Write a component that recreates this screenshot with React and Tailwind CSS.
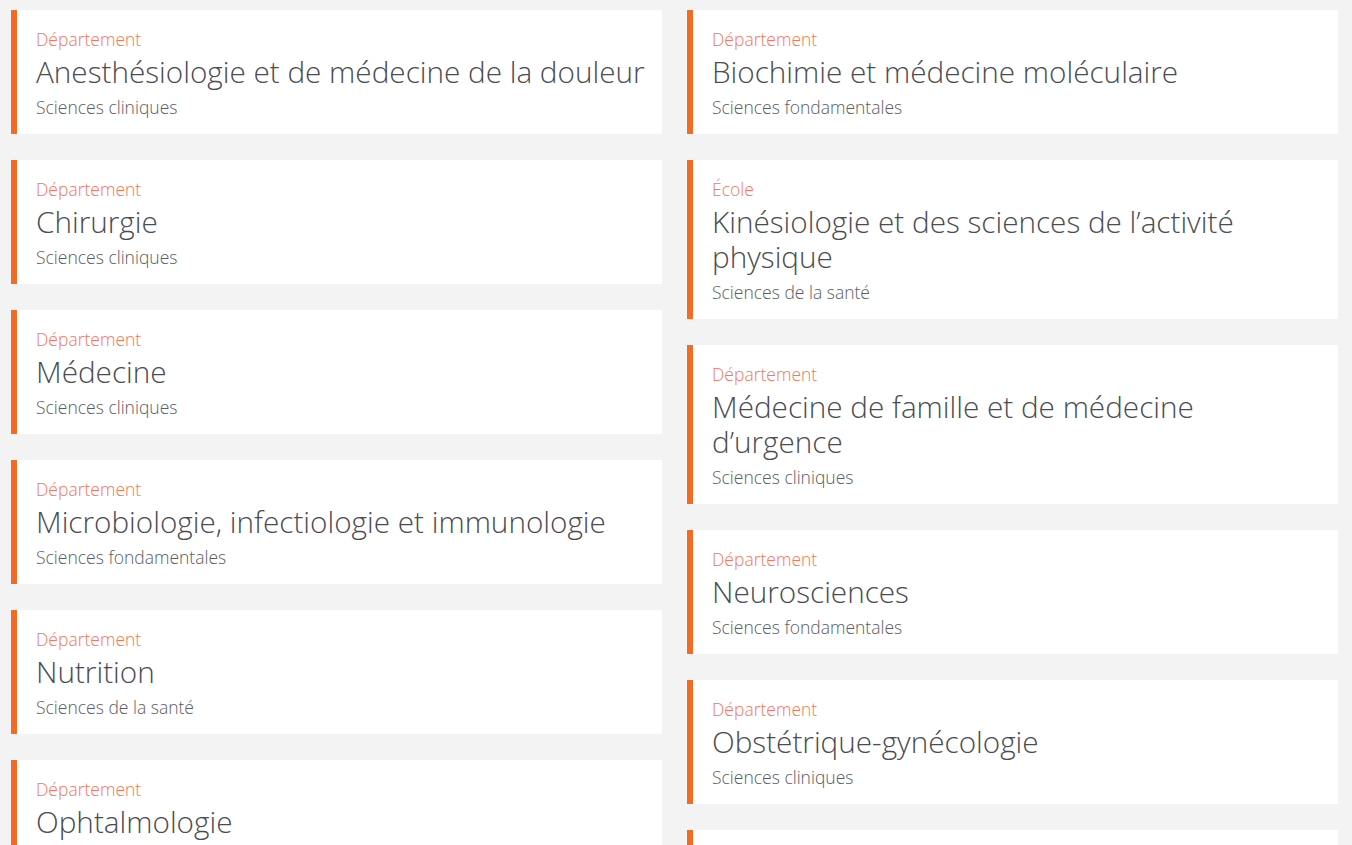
import React from "react";

const left = [
  { type: "Département", name: "Anesthésiologie et de médecine de la douleur", field: "Sciences cliniques" },
  { type: "Département", name: "Chirurgie", field: "Sciences cliniques" },
  { type: "Département", name: "Médecine", field: "Sciences cliniques" },
  { type: "Département", name: "Microbiologie, infectiologie et immunologie", field: "Sciences fondamentales" },
  { type: "Département", name: "Nutrition", field: "Sciences de la santé" },
  { type: "Département", name: "Ophtalmologie", field: "Sciences cliniques" },
];

const right = [
  { type: "Département", name: "Biochimie et médecine moléculaire", field: "Sciences fondamentales" },
  { type: "École", name: "Kinésiologie et des sciences de l’activité physique", field: "Sciences de la santé" },
  { type: "Département", name: "Médecine de famille et de médecine d’urgence", field: "Sciences cliniques" },
  { type: "Département", name: "Neurosciences", field: "Sciences fondamentales" },
  { type: "Département", name: "Obstétrique-gynécologie", field: "Sciences cliniques" },
  { type: "Département", name: "Pathologie et biologie cellulaire", field: "Sciences fondamentales" },
];

const Card = ({ item }) => (
  <a
    href="#"
    className="block bg-white border-l-[6px] border-[#f26a24] pl-[19px] pr-[12px] pt-[17px] pb-[15px] mb-[26px]"
  >
    <div className="text-[17.5px] leading-[24px] text-[#f3765a]">{item.type}</div>
    <div className="mt-[3px] text-[29.7px] leading-[35px] text-[#4a4c52]">{item.name}</div>
    <div className="mt-[6px] text-[17.5px] leading-[24px] text-[#5a5c62]">{item.field}</div>
  </a>
);

export default function App() {
  return (
    <div
      className="min-h-screen bg-[#f3f3f3] pl-[11px] pr-[14px] pt-[10px] font-light"
      style={{ fontFamily: '"Open Sans", "Liberation Sans", sans-serif' }}
    >
      <div className="grid grid-cols-2 gap-x-[25px] items-start">
        <div>
          {left.map((item) => (
            <Card key={item.name} item={item} />
          ))}
        </div>
        <div>
          {right.map((item) => (
            <Card key={item.name} item={item} />
          ))}
        </div>
      </div>
    </div>
  );
}
